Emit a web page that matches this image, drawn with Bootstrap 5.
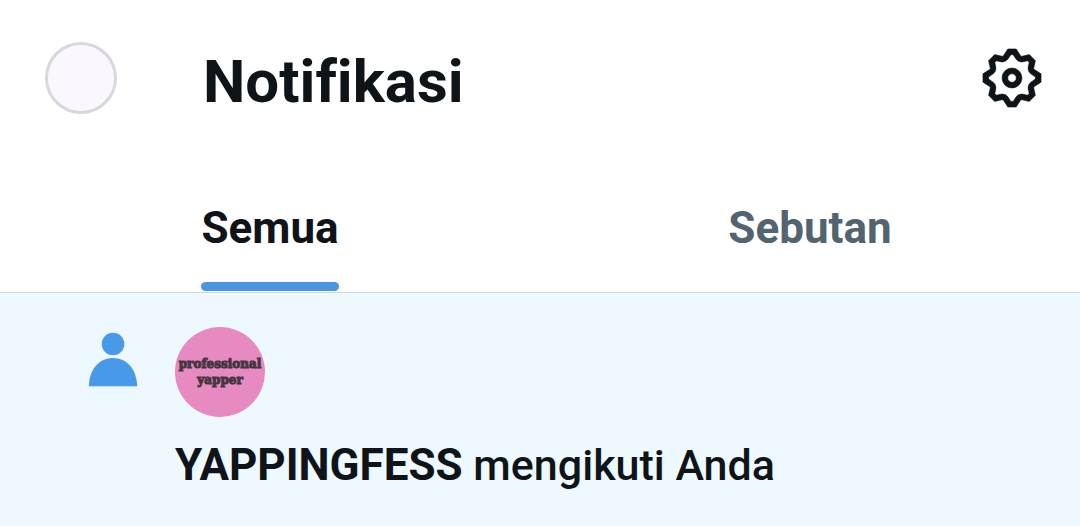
<!DOCTYPE html>
<html lang="id">
<head>
<meta charset="utf-8">
<meta name="viewport" content="width=device-width, initial-scale=1">
<title>Notifikasi</title>
<link href="https://cdn.jsdelivr.net/npm/bootstrap@5.3.0/dist/css/bootstrap.min.css" rel="stylesheet">
<style>
  body { font-family: Roboto, "Liberation Sans", sans-serif; font-variant-ligatures: none; color: #0f1419; background: #fff; }
  .top-bar { height: 156px; padding: 0 34px 0 45px; gap: 86px; }
  .profile-button { width: 72px; height: 72px; border: 3px solid #d9d6dd; background: #fbf7fe; }
  .page-title { padding-top: 8px; font-size: 60px; line-height: 72px; font-weight: 700; }
  .tab-bar { border-bottom: 1px solid #cfd9de; }
  .tab-link { padding: 44px 0 1px; font-size: 44px; line-height: 56px; font-weight: 700; color: #536471; text-decoration: none; }
  .tab-link.active { color: #0f1419; }
  .tab-label::after { content: ""; display: block; height: 9px; margin-top: 26px; border-radius: 5px; }
  .tab-link.active .tab-label::after { background: #4c96e1; }
  .notice { background: #edf8ff; padding: 34px 45px 30px 88px; gap: 37px; min-height: calc(100vh - 293px); }
  .avatar { width: 90px; height: 90px; background: #e68ac1; color: #443640; font: 700 12px/16px "DejaVu Serif", serif; -webkit-text-stroke: 1px #443640; }
  .notice-text { margin-top: 20px; font-size: 43px; line-height: 56px; font-weight: 500; }
  .notice-text strong { font-size: 44px; }
</style>
</head>
<body>
<header>
  <div class="top-bar d-flex align-items-center">
    <button class="profile-button rounded-circle p-0" type="button" aria-label="Profil"></button>
    <h1 class="page-title mb-0 flex-grow-1">Notifikasi</h1>
    <button class="btn border-0 p-0" type="button" aria-label="Pengaturan">
      <svg class="d-block" width="68" height="68" viewBox="0 0 24 24" fill="#0f1419" stroke="#0f1419" stroke-width=".2" aria-hidden="true"><path d="M10.54 1.75h2.92l1.57 2.36c.11.17.32.25.53.21l2.53-.59 2.17 2.17-.58 2.54c-.05.2.04.41.21.53l2.36 1.57v2.92l-2.36 1.57c-.17.12-.26.33-.21.53l.58 2.54-2.17 2.17-2.53-.59c-.21-.04-.42.04-.53.21l-1.57 2.36h-2.92l-1.58-2.36c-.11-.17-.32-.25-.52-.21l-2.54.59-2.17-2.17.58-2.54c.05-.2-.03-.41-.21-.53l-2.35-1.57v-2.92L4.1 8.97c.18-.12.26-.33.21-.53L3.73 5.9 5.9 3.73l2.54.59c.2.04.41-.04.52-.21l1.58-2.36zm1.07 2l-.98 1.47C10.05 6.08 9 6.5 7.99 6.27l-1.46-.34-.6.6.33 1.46c.24 1.01-.18 2.07-1.05 2.64l-1.46.98v.78l1.46.98c.87.57 1.29 1.63 1.05 2.64l-.33 1.46.6.6 1.46-.34c1.01-.23 2.06.19 2.64 1.05l.98 1.47h.78l.97-1.47c.58-.86 1.63-1.28 2.65-1.05l1.45.34.61-.6-.34-1.46c-.23-1.01.18-2.07 1.05-2.64l1.47-.98v-.78l-1.47-.98c-.87-.57-1.28-1.63-1.05-2.64l.34-1.46-.61-.6-1.45.34c-1.02.23-2.07-.19-2.65-1.05l-.97-1.47h-.78zM12 10.5c-.83 0-1.5.67-1.5 1.5s.67 1.5 1.5 1.5c.82 0 1.5-.67 1.5-1.5s-.68-1.5-1.5-1.5zM8.5 12c0-1.93 1.56-3.5 3.5-3.5 1.93 0 3.5 1.57 3.5 3.5s-1.57 3.5-3.5 3.5c-1.94 0-3.5-1.57-3.5-3.5z"/></svg>
    </button>
  </div>
  <nav class="tab-bar row g-0" aria-label="Notifikasi">
    <a class="tab-link active col-6 d-flex justify-content-center" href="#semua" aria-current="page"><span class="tab-label">Semua</span></a>
    <a class="tab-link col-6 d-flex justify-content-center" href="#sebutan"><span class="tab-label">Sebutan</span></a>
  </nav>
</header>
<main>
  <article class="notice d-flex align-items-start">
    <svg class="flex-shrink-0" width="50" height="60" viewBox="0 0 50 60" fill="#4999e9" aria-hidden="true"><circle cx="25" cy="17" r="11.3"/><path d="M.8 59.300C1.500 42 11 31 25 31S48.500 42 49.200 59.300Z"/></svg>
    <div>
      <div class="avatar rounded-circle d-flex align-items-center justify-content-center text-center">professional<br>yapper</div>
      <p class="notice-text mb-0"><strong>YAPPINGFESS</strong> mengikuti Anda</p>
    </div>
  </article>
</main>
<script src="https://cdn.jsdelivr.net/npm/bootstrap@5.3.0/dist/js/bootstrap.bundle.min.js"></script>
</body>
</html>
